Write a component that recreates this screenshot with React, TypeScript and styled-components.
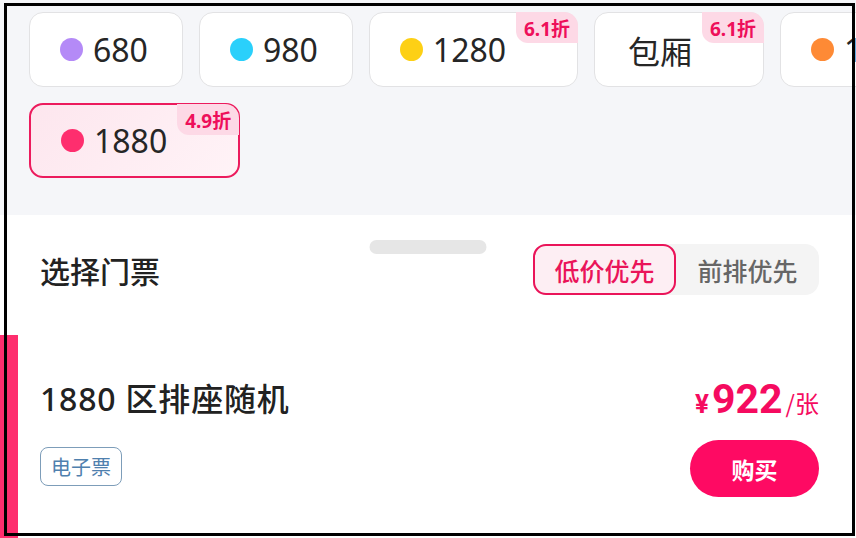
import styled, { createGlobalStyle } from "styled-components";

const GlobalStyle = createGlobalStyle`
    body {
        margin: 0;
        background: #ffffff;
        font-family: "Noto Sans", "Noto Sans CJK SC", sans-serif;
        color: #222222;
    }
`;

interface Price {
    label: string;
    dot?: string;
    badge?: string;
    selected?: boolean;
}

const rowOne: Price[] = [
    { label: "680", dot: "#b48af7" },
    { label: "980", dot: "#2ad0fb" },
    { label: "1280", dot: "#fdd015", badge: "6.1折" },
    { label: "包厢", badge: "6.1折" },
    { label: "1580", dot: "#fe8a35" }
];

const rowTwo: Price[] = [{ label: "1880", dot: "#fe2e6e", badge: "4.9折", selected: true }];

const Page = styled.div`
    position: relative;
    width: 856px;
    height: 538px;
    overflow: hidden;
    background: #ffffff;
`;

// black screenshot frame drawn over everything
const Frame = styled.div`
    position: absolute;
    top: 3px;
    left: 4px;
    right: 1px;
    bottom: 2px;
    border: 3px solid #000000;
    pointer-events: none;
    z-index: 5;
`;

const PriceArea = styled.div`
    height: 215px;
    box-sizing: border-box;
    padding: 12px 0 0 29px;
    background: #f5f6f9;
    display: flex;
    flex-direction: column;
    gap: 16px;
`;

const ChipRow = styled.div`
    display: flex;
    gap: 16px;
    flex-wrap: nowrap;
`;

const Chip = styled.div<{ $selected?: boolean; $badge?: boolean; $dot?: boolean }>`
    position: relative;
    flex: none;
    height: 75px;
    box-sizing: border-box;
    display: flex;
    align-items: center;
    gap: 10px;
    padding: 0 ${p => (p.$badge ? "71px" : "34px")} 0 ${p => (p.$dot ? "30px" : "33px")};
    border-radius: 14px;
    border: ${p => (p.$selected ? "2px solid #ec1b5d" : "1.5px solid #e2e2e4")};
    background: ${p => (p.$selected ? "linear-gradient(135deg, #fde6ee, #fff3f7)" : "#ffffff")};
    font-size: 32px;
    color: #262626;
`;

const Dot = styled.span<{ $color: string }>`
    width: 23px;
    height: 23px;
    border-radius: 50%;
    background: ${p => p.$color};
`;

const Badge = styled.span`
    position: absolute;
    top: -1px;
    right: -1px;
    padding: 0 8px;
    height: 31px;
    display: flex;
    align-items: center;
    border-radius: 0 14px 0 12px;
    background: #fdd9e6;
    color: #ee0f5a;
    font-size: 19px;
    font-weight: 700;
`;

const Sheet = styled.div`
    position: relative;
    height: 323px;
    background: #ffffff;
    padding-top: 29px;
    box-sizing: border-box;
`;

const Handle = styled.div`
    position: absolute;
    top: 25px;
    left: 50%;
    transform: translateX(-50%);
    width: 117px;
    height: 14px;
    border-radius: 7px;
    background: #e6e6e6;
`;

const Header = styled.div`
    display: flex;
    align-items: center;
    justify-content: space-between;
    padding: 0 37px 0 40px;
`;

const Title = styled.h2`
    margin: 0;
    font-size: 30px;
    font-weight: 500;
    color: #222222;
`;

const Toggle = styled.div`
    display: flex;
    height: 51px;
    border-radius: 14px;
    background: #f4f4f4;
`;

const ToggleItem = styled.div<{ $active?: boolean }>`
    width: 143px;
    box-sizing: border-box;
    display: flex;
    align-items: center;
    justify-content: center;
    border-radius: 13px;
    font-size: 25px;
    font-weight: 500;
    color: ${p => (p.$active ? "#ea1459" : "#666666")};
    border: ${p => (p.$active ? "2px solid #ea1459" : "none")};
    background: ${p => (p.$active ? "#fdeef3" : "transparent")};
`;

const Ticket = styled.div`
    position: relative;
    margin-top: 40px;
    height: 203px;
    box-sizing: border-box;
    padding: 44px 37px 0 40px;
    display: flex;
    justify-content: space-between;

    &::before {
        content: "";
        position: absolute;
        left: 0;
        top: 0;
        bottom: 0;
        width: 18px;
        background: #fe2e6e;
    }
`;

const TicketInfo = styled.div`
    display: flex;
    flex-direction: column;
    align-items: flex-start;
`;

const TicketName = styled.div`
    font-size: 32px;
    line-height: 40px;
    letter-spacing: 0.8px;
    font-weight: 500;
    color: #222222;
`;

const Tag = styled.span`
    margin-top: 28px;
    height: 39px;
    box-sizing: border-box;
    padding: 0 10px;
    display: flex;
    align-items: center;
    border: 1px solid #7d9db9;
    border-radius: 8px;
    color: #4f80ae;
    font-size: 20px;
`;

const TicketSide = styled.div`
    display: flex;
    flex-direction: column;
    align-items: flex-end;
`;

const PriceLine = styled.div`
    height: 40px;
    display: flex;
    align-items: baseline;
    color: #f50b5f;
    font-family: Roboto, "Noto Sans CJK SC", sans-serif;
`;

const Yen = styled.span`
    font-size: 26px;
    font-weight: 700;
    margin-right: 3px;
`;

const Amount = styled.span`
    font-size: 41px;
    line-height: 40px;
    font-weight: 700;
`;

const Unit = styled.span`
    font-size: 24px;
    margin-left: 3px;
    font-family: "Noto Sans CJK SC", sans-serif;
`;

const BuyButton = styled.button`
    margin-top: 21px;
    width: 129px;
    height: 57px;
    border: none;
    border-radius: 29px;
    background: #fe0a63;
    color: #ffffff;
    font-family: "Noto Sans CJK SC", sans-serif;
    font-size: 23px;
    font-weight: 700;
`;

function PriceChip({ item }: { item: Price }) {
    return (
        <Chip $selected={item.selected} $badge={!!item.badge} $dot={!!item.dot}>
            {item.dot && <Dot $color={item.dot} />}
            <span>{item.label}</span>
            {item.badge && <Badge>{item.badge}</Badge>}
        </Chip>
    );
}

export default function App() {
    return (
        <>
            <GlobalStyle />
            <Page>
                <PriceArea>
                    <ChipRow>
                        {rowOne.map(item => (
                            <PriceChip key={item.label} item={item} />
                        ))}
                    </ChipRow>
                    <ChipRow>
                        {rowTwo.map(item => (
                            <PriceChip key={item.label} item={item} />
                        ))}
                    </ChipRow>
                </PriceArea>
                <Sheet>
                    <Handle />
                    <Header>
                        <Title>选择门票</Title>
                        <Toggle>
                            <ToggleItem $active>低价优先</ToggleItem>
                            <ToggleItem>前排优先</ToggleItem>
                        </Toggle>
                    </Header>
                    <Ticket>
                        <TicketInfo>
                            <TicketName>1880 区排座随机</TicketName>
                            <Tag>电子票</Tag>
                        </TicketInfo>
                        <TicketSide>
                            <PriceLine>
                                <Yen>¥</Yen>
                                <Amount>922</Amount>
                                <Unit>/张</Unit>
                            </PriceLine>
                            <BuyButton>购买</BuyButton>
                        </TicketSide>
                    </Ticket>
                </Sheet>
                <Frame />
            </Page>
        </>
    );
}
